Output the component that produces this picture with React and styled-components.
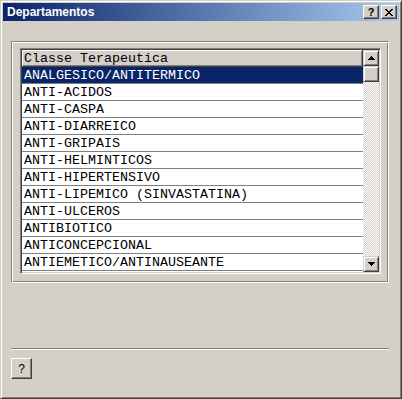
import React from 'react';
import styled, { createGlobalStyle } from 'styled-components';

const GlobalStyle = createGlobalStyle`
  html, body {
    margin: 0;
    padding: 0;
    background: #d4d0c8;
  }
`;

const classes = [
  'ANALGESICO/ANTITERMICO',
  'ANTI-ACIDOS',
  'ANTI-CASPA',
  'ANTI-DIARREICO',
  'ANTI-GRIPAIS',
  'ANTI-HELMINTICOS',
  'ANTI-HIPERTENSIVO',
  'ANTI-LIPEMICO (SINVASTATINA)',
  'ANTI-ULCEROS',
  'ANTIBIOTICO',
  'ANTICONCEPCIONAL',
  'ANTIEMETICO/ANTINAUSEANTE',
];

const Window = styled.div`
  box-sizing: border-box;
  width: 402px;
  height: 399px;
  padding: 2px;
  background: #d4d0c8;
  border: 1px solid;
  border-color: #d4d0c8 #404040 #404040 #d4d0c8;
  box-shadow: inset 1px 1px 0 #fff, inset -1px -1px 0 #808080;
  display: flex;
  flex-direction: column;
`;

const TitleBar = styled.div`
  height: 18px;
  flex: 0 0 18px;
  display: flex;
  align-items: center;
  padding: 0 2px 0 2px;
  background: linear-gradient(to right, #0a246a, #a6caf0);
`;

const TitleText = styled.div`
  flex: 1;
  padding-left: 2px;
  color: #fff;
  font-family: Tahoma, "Liberation Sans", sans-serif;
  font-weight: bold;
  font-size: 12px;
  line-height: 18px;
  white-space: nowrap;
`;

const CaptionButton = styled.div`
  box-sizing: border-box;
  width: 16px;
  height: 14px;
  margin-left: ${p => p.gap || 0}px;
  background: #d4d0c8;
  border: 1px solid;
  border-color: #fff #404040 #404040 #fff;
  box-shadow: inset -1px -1px 0 #808080;
  display: flex;
  align-items: center;
  justify-content: center;
  font-family: "Liberation Sans", sans-serif;
  font-weight: bold;
  font-size: 11px;
  line-height: 1;
  color: #000;
`;

const Body = styled.div`
  flex: 1;
  display: flex;
  flex-direction: column;
  padding: 20px 0 0 8px;
`;

const GroupBox = styled.div`
  box-sizing: border-box;
  width: 378px;
  height: 242px;
  border: 1px solid;
  border-color: #808080 #fff #fff #808080;
  box-shadow: inset 1px 1px 0 #fff, inset -1px -1px 0 #808080;
  padding: 6px 7px 7px 8px;
`;

const ListBox = styled.div`
  box-sizing: border-box;
  width: 361px;
  height: 226px;
  border: 1px solid;
  border-color: #808080 #fff #fff #808080;
  box-shadow: inset 1px 1px 0 #404040, inset -1px -1px 0 #d4d0c8;
  padding: 1px;
  background: #fff;
  display: flex;
`;

const Rows = styled.div`
  flex: 1;
  overflow: hidden;
  display: flex;
  flex-direction: column;
`;

const Header = styled.div`
  box-sizing: border-box;
  height: 17px;
  flex: 0 0 17px;
  background: #d4d0c8;
  border-right: 1px solid #404040;
  border-bottom: 1px solid #404040;
  box-shadow: inset 1px 1px 0 #fff, inset -1px -1px 0 #808080;
  padding: 2px 0 0 2px;
  font-family: "Liberation Mono", "Courier New", monospace;
  font-size: 13.33px;
  line-height: 14px;
  color: #000;
  white-space: nowrap;
`;

const Row = styled.div`
  box-sizing: border-box;
  height: 17px;
  flex: 0 0 17px;
  border-bottom: 1px solid #808080;
  padding: 1px 0 0 2px;
  background: ${p => (p.selected ? '#0a246a' : '#fff')};
  color: ${p => (p.selected ? '#fff' : '#000')};
  font-family: "Liberation Mono", "Courier New", monospace;
  font-size: 13.33px;
  line-height: 15px;
  white-space: nowrap;
`;

const ScrollBar = styled.div`
  width: 16px;
  flex: 0 0 16px;
  display: flex;
  flex-direction: column;
  background: repeating-conic-gradient(#fff 0 25%, #d4d0c8 0 50%) 0 0 / 2px 2px;
`;

const ScrollButton = styled.div`
  box-sizing: border-box;
  width: 16px;
  height: 16px;
  flex: 0 0 16px;
  background: #d4d0c8;
  border: 1px solid;
  border-color: #d4d0c8 #404040 #404040 #d4d0c8;
  box-shadow: inset 1px 1px 0 #fff, inset -1px -1px 0 #808080;
  display: flex;
  align-items: center;
  justify-content: center;
`;

const Track = styled.div`
  flex: 1;
`;

const Separator = styled.div`
  width: 378px;
  height: 1px;
  margin-top: 65px;
  background: #808080;
  border-bottom: 1px solid #fff;
`;

const HelpButton = styled.button`
  box-sizing: border-box;
  width: 21px;
  height: 21px;
  margin-top: 8px;
  padding: 0;
  background: #d4d0c8;
  border: 1px solid;
  border-color: #fff #404040 #404040 #fff;
  box-shadow: inset -1px -1px 0 #808080;
  font-family: Tahoma, "Liberation Sans", sans-serif;
  font-size: 12px;
  color: #000;
`;

const Arrow = ({ down }) => (
  <svg width={7} height={4} viewBox="0 0 7 4">
    <path d={down ? 'M0 0h7L3.5 4z' : 'M3.5 0L7 4H0z'} fill="#000" shapeRendering="crispEdges" />
  </svg>
);

export default function App() {
  return (
    <>
      <GlobalStyle />
      <Window>
        <TitleBar>
          <TitleText>Departamentos</TitleText>
          <CaptionButton>?</CaptionButton>
          <CaptionButton gap={2}>
            <svg width={8} height={7} viewBox="0 0 8 7">
              <path d="M0 0h2l2 2.5L6 0h2L5 3.5 8 7H6L4 4.5 2 7H0l3-3.5z" fill="#000" shapeRendering="crispEdges" />
            </svg>
          </CaptionButton>
        </TitleBar>
        <Body>
          <GroupBox>
            <ListBox>
              <Rows>
                <Header>Classe Terapeutica</Header>
                {classes.map((c, i) => (
                  <Row key={c} selected={i === 0}>{c}</Row>
                ))}
              </Rows>
              <ScrollBar>
                <ScrollButton><Arrow /></ScrollButton>
                <ScrollButton />
                <Track />
                <ScrollButton><Arrow down /></ScrollButton>
              </ScrollBar>
            </ListBox>
          </GroupBox>
          <Separator />
          <HelpButton>?</HelpButton>
        </Body>
      </Window>
    </>
  );
}
